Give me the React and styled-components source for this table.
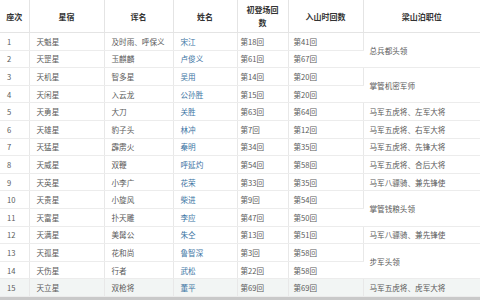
import React from "react";
import styled, { createGlobalStyle } from "styled-components";

const GlobalStyle = createGlobalStyle`
  html, body {
    margin: 0;
    padding: 0;
    background: #fff;
  }
  body {
    width: 480px;
    height: 300px;
    overflow: hidden;
    font-family: "Noto Sans CJK SC", "Liberation Sans", sans-serif;
  }
`;

const Page = styled.div`
  width: 480px;
  height: 300px;
  display: flex;
  flex-direction: column;
  overflow: hidden;
`;

const Table = styled.table`
  width: 480px;
  border-collapse: collapse;
  table-layout: fixed;
  color: #5a5a5a;
  font-size: 7.6px;
`;

const HeadCell = styled.th`
  height: 32px;
  padding: 0 2px;
  font-size: 8px;
  line-height: 13px;
  font-weight: bold;
  color: #333;
  text-align: center;
  border-right: 1px solid #e4e4e4;
  border-bottom: 1px solid #e4e4e4;
  &:last-child {
    border-right: none;
  }
`;

const Row = styled.tr`
  height: 17.6px;
  background: ${(p) => (p.$shade ? "#f2f5f4" : "#fff")};
`;

const Cell = styled.td`
  padding: 0 0 0 ${(p) => p.$pad || 6}px;
  line-height: 11px;
  white-space: nowrap;
  border-right: 1px solid #e8e8e8;
  border-bottom: 1px solid #ececec;
  color: ${(p) => (p.$link ? "#3b74a3" : "#5a5a5a")};
  &:last-child {
    border-right: none;
  }
`;

const BottomBar = styled.div`
  height: 3px;
  background: #c9c9c9;
`;

const rows = [
  ["1", "天魁星", "及时雨、呼保义", "宋江", "第18回", "第41回"],
  ["2", "天罡星", "玉麒麟", "卢俊义", "第61回", "第67回"],
  ["3", "天机星", "智多星", "吴用", "第14回", "第20回"],
  ["4", "天闲星", "入云龙", "公孙胜", "第15回", "第20回"],
  ["5", "天勇星", "大刀", "关胜", "第63回", "第64回"],
  ["6", "天雄星", "豹子头", "林冲", "第7回", "第12回"],
  ["7", "天猛星", "霹雳火", "秦明", "第34回", "第35回"],
  ["8", "天威星", "双鞭", "呼延灼", "第54回", "第58回"],
  ["9", "天英星", "小李广", "花荣", "第33回", "第35回"],
  ["10", "天贵星", "小旋风", "柴进", "第9回", "第54回"],
  ["11", "天富星", "扑天雕", "李应", "第47回", "第50回"],
  ["12", "天满星", "美髯公", "朱仝", "第13回", "第51回"],
  ["13", "天孤星", "花和尚", "鲁智深", "第3回", "第58回"],
  ["14", "天伤星", "行者", "武松", "第22回", "第58回"],
  ["15", "天立星", "双枪将", "董平", "第69回", "第69回"],
];

// position column: [row index, rowSpan, text]
const posts = {
  0: [2, "总兵都头领"],
  2: [2, "掌管机密军师"],
  4: [1, "马军五虎将、左军大将"],
  5: [1, "马军五虎将、右军大将"],
  6: [1, "马军五虎将、先锋大将"],
  7: [1, "马军五虎将、合后大将"],
  8: [1, "马军八骠骑、兼先锋使"],
  9: [2, "掌管钱粮头领"],
  11: [1, "马军八骠骑、兼先锋使"],
  12: [2, "步军头领"],
  14: [1, "马军五虎将、虎军大将"],
};

const widths = [29, 75, 69, 64, 51, 75, 117];
const heads = ["座次", "星宿", "诨名", "姓名", "初登场回数", "入山时回数", "梁山泊职位"];

export default function App() {
  return (
    <Page>
      <GlobalStyle />
      <Table>
        <colgroup>
          {widths.map((w, i) => (
            <col key={i} style={{ width: w }} />
          ))}
        </colgroup>
        <thead>
          <tr>
            {heads.map((h, i) => (
              <HeadCell key={h}>{i === 4 ? <>初登场回<br />数</> : h}</HeadCell>
            ))}
          </tr>
        </thead>
        <tbody>
          {rows.map((r, i) => (
            <Row key={r[0]} $shade={i === 14}>
              <Cell $pad={7}>{r[0]}</Cell>
              <Cell $pad={7}>{r[1]}</Cell>
              <Cell $pad={7}>{r[2]}</Cell>
              <Cell $pad={7} $link>{r[3]}</Cell>
              <Cell $pad={3}>{r[4]}</Cell>
              <Cell $pad={5}>{r[5]}</Cell>
              {posts[i] && <Cell $pad={6} rowSpan={posts[i][0]}>{posts[i][1]}</Cell>}
            </Row>
          ))}
        </tbody>
      </Table>
      <BottomBar />
    </Page>
  );
}
